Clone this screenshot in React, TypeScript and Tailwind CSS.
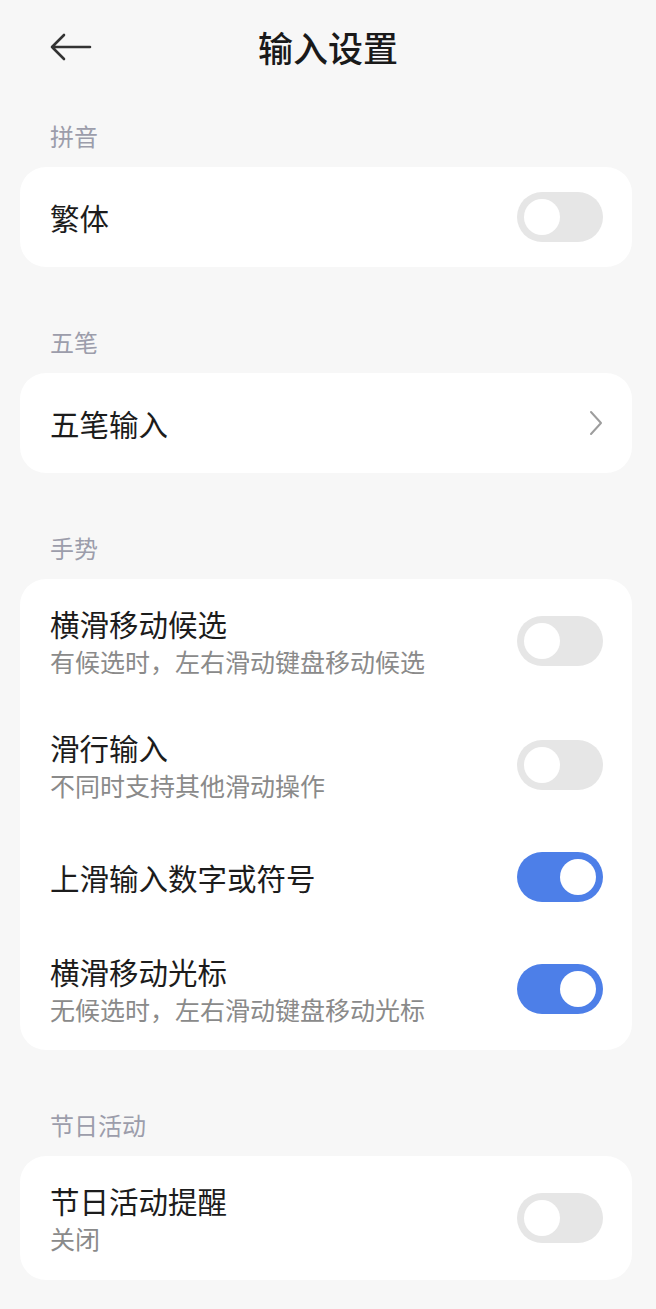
import React from "react";

type Row = { title: string; sub?: string; on?: boolean; arrow?: boolean; h: string };

const sections: { label: string; rows: Row[] }[] = [
  { label: "拼音", rows: [{ title: "繁体", on: false, h: "h-[100px]" }] },
  { label: "五笔", rows: [{ title: "五笔输入", arrow: true, h: "h-[100px]" }] },
  {
    label: "手势",
    rows: [
      { title: "横滑移动候选", sub: "有候选时，左右滑动键盘移动候选", on: false, h: "h-[124px]" },
      { title: "滑行输入", sub: "不同时支持其他滑动操作", on: false, h: "h-[124px]" },
      { title: "上滑输入数字或符号", on: true, h: "h-[100px]" },
      { title: "横滑移动光标", sub: "无候选时，左右滑动键盘移动光标", on: true, h: "h-[123px]" },
    ],
  },
  { label: "节日活动", rows: [{ title: "节日活动提醒", sub: "关闭", on: false, h: "h-[124px]" }] },
];

function Toggle({ on }: { on: boolean }) {
  return (
    <div
      className={`flex h-[50px] w-[86px] shrink-0 items-center rounded-full p-[7px] ${
        on ? "justify-end bg-[#4d7fe8]" : "justify-start bg-[#e6e6e6]"
      }`}
    >
      <div className="h-[36px] w-[36px] rounded-full bg-white" />
    </div>
  );
}

function Chevron() {
  return (
    <svg width="18" height="28" viewBox="0 0 18 28" fill="none" className="mr-[-2px]">
      <path d="M4 3 L14 14 L4 25" stroke="#9d9d9d" strokeWidth="2" strokeLinecap="round" strokeLinejoin="round" />
    </svg>
  );
}

export default function App() {
  return (
    <div className="min-h-screen bg-[#f7f7f7] pb-[31px] font-['Noto_Sans_CJK_SC','Noto_Sans',sans-serif]">
      <header className="grid h-[94px] grid-cols-[1fr_auto_1fr] items-center">
        <div className="pl-[48px]">
          <svg width="44" height="30" viewBox="0 0 44 30" fill="none">
            <path
              d="M42 15 H4 M16 3 L4 15 L16 27"
              stroke="#333333"
              strokeWidth="2.6"
              strokeLinecap="round"
              strokeLinejoin="round"
            />
          </svg>
        </div>
        <h1 className="text-[35px] leading-[44px] font-medium text-[#1a1a1a]">输入设置</h1>
        <div />
      </header>

      <div className="pt-[26px]">
        {sections.map((s, i) => (
          <section key={s.label} className={i > 0 ? "mt-[59px]" : ""}>
            <div className="mb-[15px] pl-[50px] text-[24px] leading-[32px] text-[#9c9dab]">{s.label}</div>
            <div className="ml-[20px] mr-[24px] rounded-[26px] bg-white">
              {s.rows.map((r) => (
                <div key={r.title} className={`flex items-center justify-between pl-[30px] pr-[29px] ${r.h}`}>
                  <div>
                    <div className="text-[29.5px] leading-[36px] text-[#1c1c1c]">{r.title}</div>
                    {r.sub && <div className="mt-[4px] text-[25px] leading-[32px] text-[#8a8a8a]">{r.sub}</div>}
                  </div>
                  {r.arrow ? <Chevron /> : <Toggle on={!!r.on} />}
                </div>
              ))}
            </div>
          </section>
        ))}
      </div>
    </div>
  );
}
